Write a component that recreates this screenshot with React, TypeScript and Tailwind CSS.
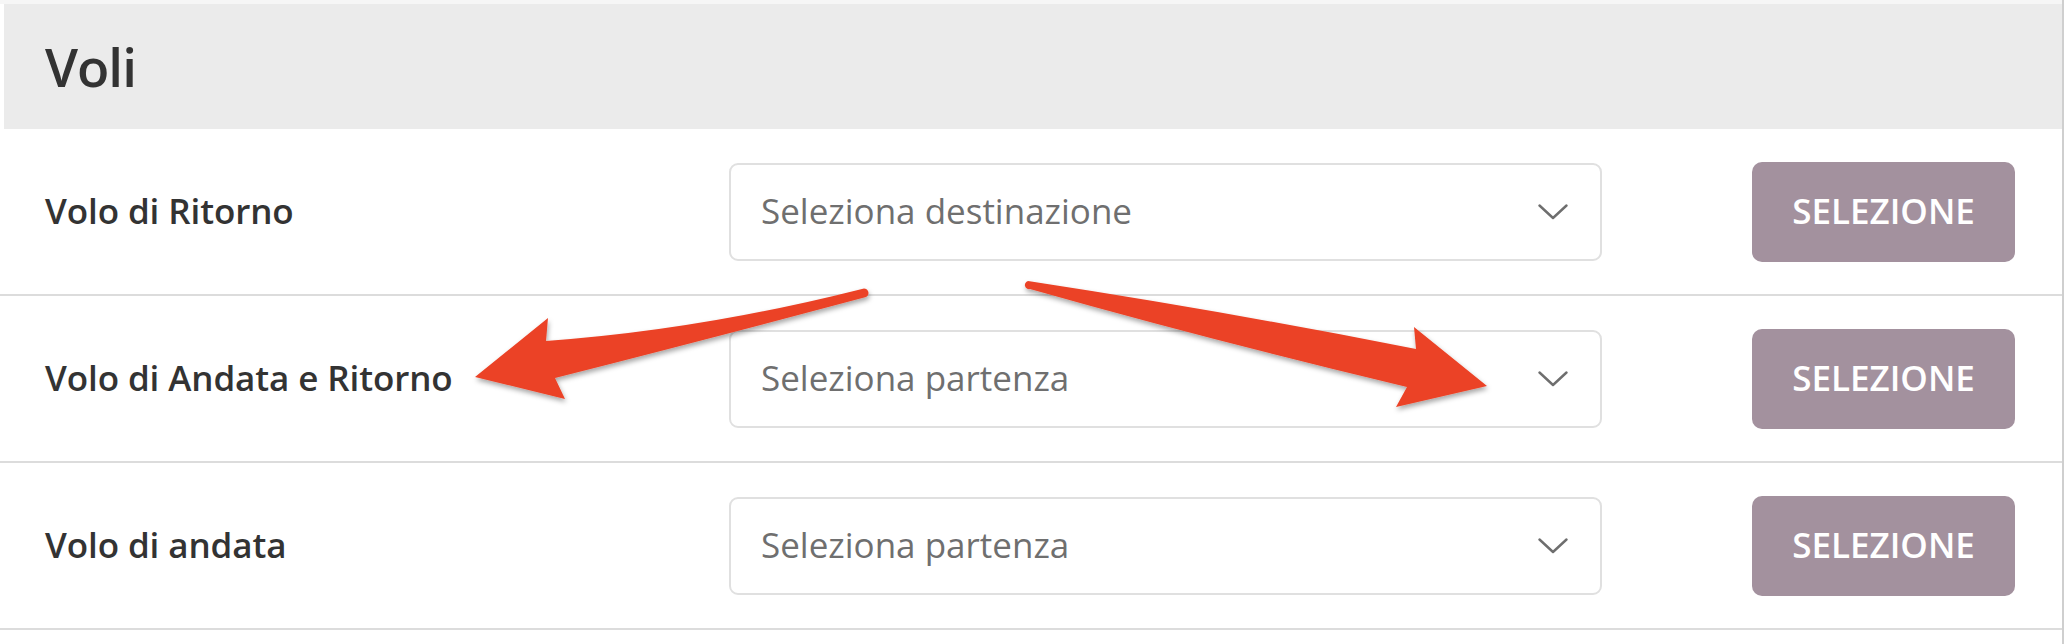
import React from "react";

const rows = [
  { label: "Volo di Ritorno", placeholder: "Seleziona destinazione" },
  { label: "Volo di Andata e Ritorno", placeholder: "Seleziona partenza" },
  { label: "Volo di andata", placeholder: "Seleziona partenza" },
];

function Chevron() {
  return (
    <svg width="30" height="16" viewBox="0 0 30 16" fill="none">
      <path d="M1.5 1.5 L15 14 L28.5 1.5" stroke="#6e6e6e" strokeWidth="2.4" strokeLinecap="round" strokeLinejoin="round" />
    </svg>
  );
}

function Arrows() {
  return (
    <svg
      className="pointer-events-none absolute left-0 top-0"
      width="2066"
      height="644"
      viewBox="0 0 2066 644"
    >
      <defs>
        <filter id="sh" x="-10%" y="-20%" width="120%" height="160%">
          <feDropShadow dx="1" dy="3" stdDeviation="2.5" floodColor="#000" floodOpacity="0.35" />
        </filter>
      </defs>
      <path
        filter="url(#sh)"
        fill="#eb4226"
        d="M 862 289 Q 700 330 546 341 L 548 318 L 475 377 L 565 399 L 555 378 Q 720 336 866 297 A 4 4 0 0 0 862 289 Z"
      />
      <path
        filter="url(#sh)"
        fill="#eb4226"
        d="M 1028 281 Q 1230 312 1416 349 L 1414 327 L 1487 386 L 1396 407 L 1407 387 Q 1210 340 1030 289 A 4 4 0 0 1 1028 281 Z"
      />
    </svg>
  );
}

export default function App() {
  return (
    <div
      className="relative h-[644px] w-[2066px] overflow-hidden bg-white"
      style={{ fontFamily: '"Open Sans", "Noto Sans", sans-serif' }}
    >
      <div className="w-[2064px] border-r-2 border-[#cfcfcf] h-[644px]">
        <div className="h-[4px] bg-[#f6f6f6]" />
        <div className="ml-[4px] flex h-[125px] items-center bg-[#ebebeb] pl-[41px]">
          <h1 className="text-[53px] font-semibold leading-none tracking-[-1px] text-[#333333]">Voli</h1>
        </div>
        {rows.map((r) => (
          <div
            key={r.label}
            className="flex h-[167px] items-center border-b-2 border-[#dcdcdc] pl-[45px]"
          >
            <div className="w-[684px] text-[35px] font-semibold tracking-[-0.1px] text-[#333333]">{r.label}</div>
            <div className="flex h-[98px] w-[873px] items-center justify-between rounded-[9px] border-2 border-[#e0e0e0] pl-[30px] pr-[32px]">
              <span className="text-[35px] text-[#6f6f6f]">{r.placeholder}</span>
              <Chevron />
            </div>
            <button className="ml-[150px] flex h-[100px] w-[263px] items-center justify-center rounded-[10px] bg-[#a3919e] text-[35px] font-semibold text-white">
              SELEZIONE
            </button>
          </div>
        ))}
      </div>
      <Arrows />
    </div>
  );
}
